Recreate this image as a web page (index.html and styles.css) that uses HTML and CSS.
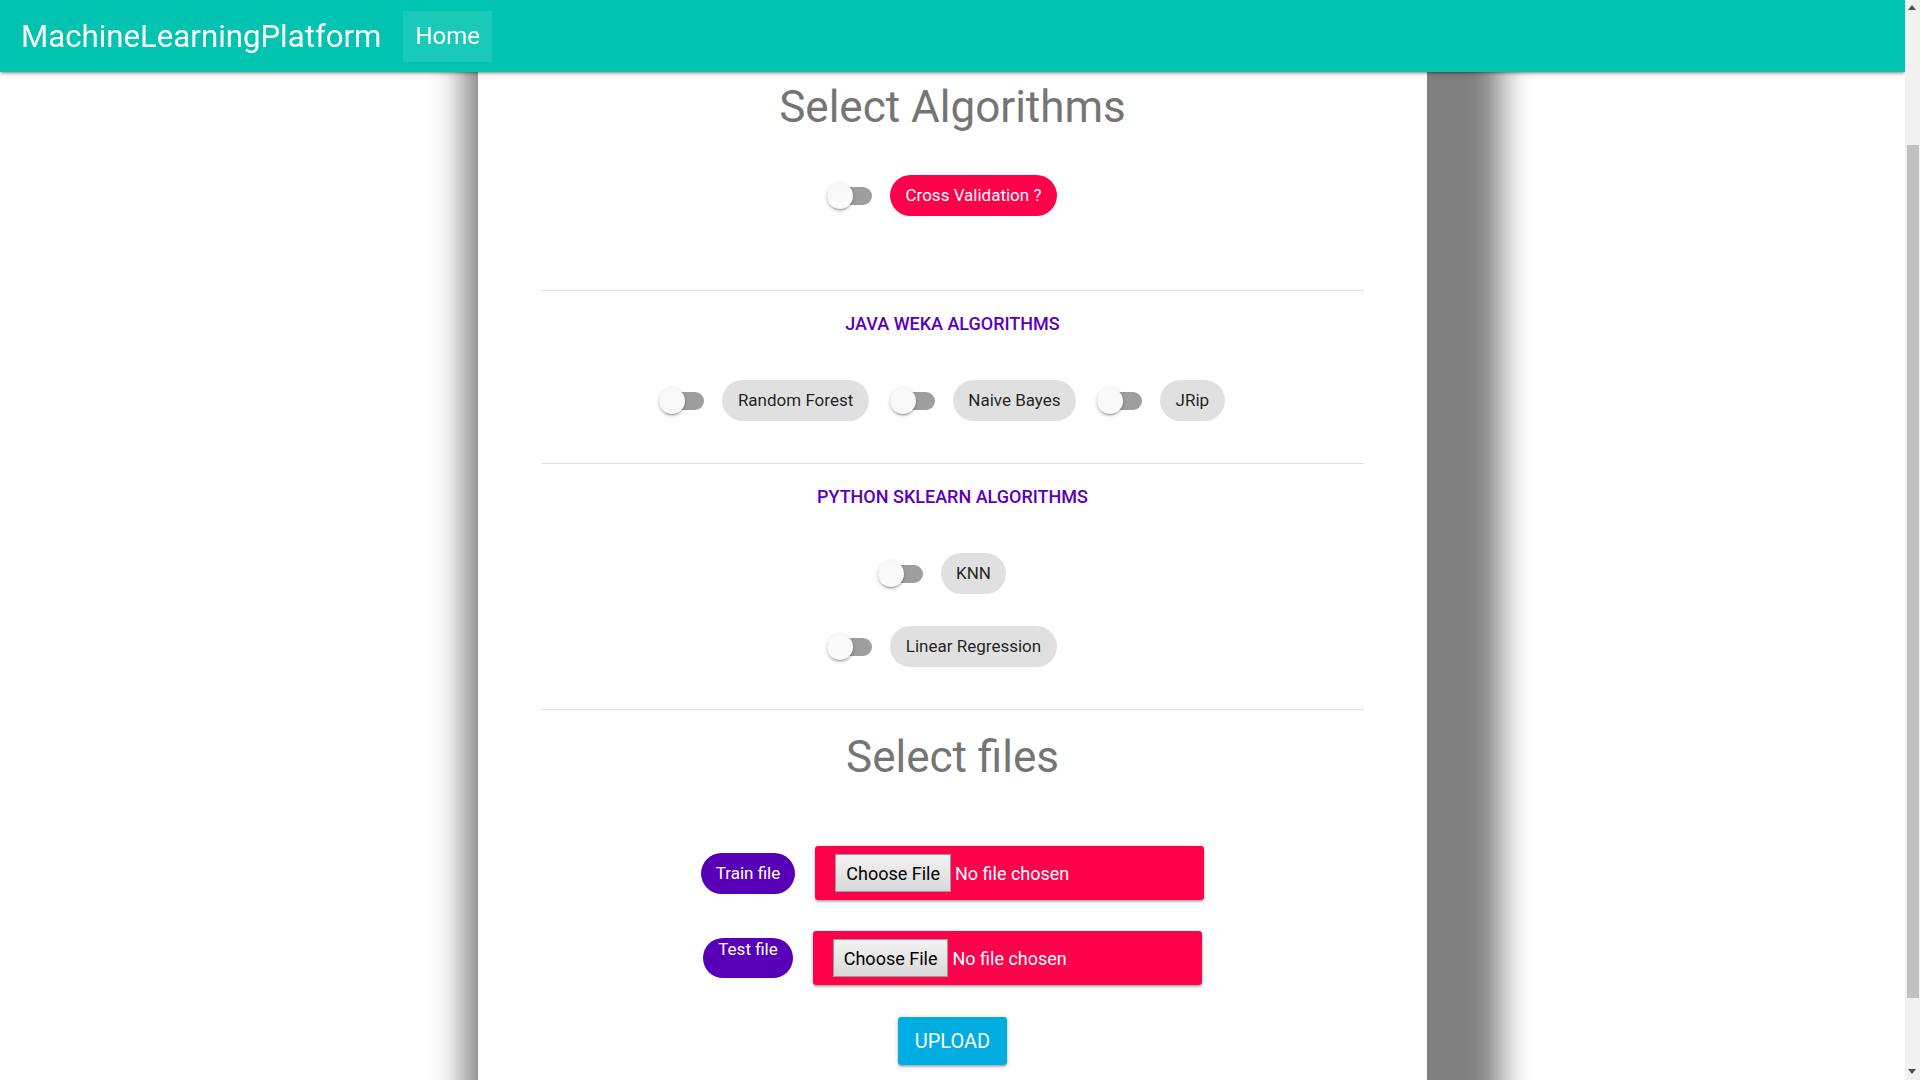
FILE: index.html
```html
<!DOCTYPE html>
<html lang="en">
<head>
<meta charset="utf-8">
<title>MachineLearningPlatform</title>
<link rel="stylesheet" href="styles.css">
</head>
<body>
<header class="navbar">
  <a class="brand" href="#">MachineLearningPlatform</a>
  <a class="nav-link" href="#">Home</a>
</header>

<main class="card">
  <h2 class="section-title">Select Algorithms</h2>

  <div class="algo-row cv-row">
    <label class="algo">
      <span class="switch"></span>
      <span class="chip chip-red">Cross Validation ?</span>
    </label>
  </div>

  <hr class="divider divider-first">

  <h3 class="group-title">JAVA WEKA ALGORITHMS</h3>
  <div class="algo-row group-row">
    <label class="algo">
      <span class="switch"></span>
      <span class="chip">Random Forest</span>
    </label>
    <label class="algo">
      <span class="switch"></span>
      <span class="chip">Naive Bayes</span>
    </label>
    <label class="algo">
      <span class="switch"></span>
      <span class="chip">JRip</span>
    </label>
  </div>

  <hr class="divider">

  <h3 class="group-title">PYTHON SKLEARN ALGORITHMS</h3>
  <div class="algo-row group-row">
    <label class="algo">
      <span class="switch"></span>
      <span class="chip">KNN</span>
    </label>
  </div>
  <div class="algo-row next-row">
    <label class="algo">
      <span class="switch"></span>
      <span class="chip">Linear Regression</span>
    </label>
  </div>

  <hr class="divider">

  <h2 class="section-title">Select files</h2>

  <div class="file-row train-row">
    <span class="chip chip-purple">Train file</span>
    <div class="file-box">
      <input class="file-input" type="file">
    </div>
  </div>

  <div class="file-row test-row">
    <span class="chip chip-purple chip-top">Test file</span>
    <div class="file-box">
      <input class="file-input" type="file">
    </div>
  </div>

  <button class="upload-btn" type="button">UPLOAD</button>
</main>

<div class="scroll-rail" aria-hidden="true">
  <span class="rail-arrow rail-arrow-up"></span>
  <span class="rail-thumb"></span>
  <span class="rail-arrow rail-arrow-down"></span>
</div>
</body>
</html>
```

FILE: styles.css
```css
* {
  box-sizing: border-box;
}

html,
body {
  margin: 0;
  padding: 0;
}

body {
  padding-right: 15px;
  font-family: Roboto, "Liberation Sans", Arial, sans-serif;
  background: #ffffff;
  color: rgba(0, 0, 0, 0.87);
}

/* ---------- Navbar ---------- */
.navbar {
  position: fixed;
  top: 0;
  left: 0;
  right: 15px;
  height: 72px;
  z-index: 10;
  display: flex;
  align-items: center;
  padding-left: 21px;
  background: #00c4b0;
  box-shadow: 0 2px 2px 0 rgba(0, 0, 0, 0.14), 0 3px 1px -2px rgba(0, 0, 0, 0.12), 0 1px 6px 0 rgba(0, 0, 0, 0.22);
}

.brand {
  color: #ffffff;
  font-size: 31.2px;
  font-weight: 400;
  text-decoration: none;
}

.nav-link {
  margin-left: 22px;
  height: 51px;
  line-height: 51px;
  padding: 0 12px;
  font-size: 24px;
  color: #ffffff;
  text-decoration: none;
  background: rgba(255, 255, 255, 0.1);
}

/* ---------- Scroll rail (page scrollbar) ---------- */
.scroll-rail {
  position: fixed;
  top: 0;
  right: 0;
  bottom: 0;
  width: 15px;
  z-index: 20;
  background: #f1f1f1;
}

.rail-thumb {
  position: absolute;
  top: 145px;
  left: 2px;
  right: 1px;
  height: 853px;
  background: #c1c1c1;
}

.rail-arrow {
  position: absolute;
  left: 3px;
  width: 0;
  height: 0;
  border-left: 4.5px solid transparent;
  border-right: 4.5px solid transparent;
}

.rail-arrow-up {
  top: 5px;
  border-bottom: 5px solid #505050;
}

.rail-arrow-down {
  bottom: 6px;
  border-top: 5px solid #505050;
}

/* ---------- Card ---------- */
.card {
  width: 949px;
  margin: 0 auto;
  padding: 81px 63px 99px;
  background: #ffffff;
  box-shadow: 30px 0 30px 44px #808080;
}

.section-title {
  margin: 0;
  font-size: 44px;
  line-height: 52px;
  font-weight: 400;
  color: #757575;
  text-align: center;
}

.divider {
  height: 1px;
  margin: 42px 0 0;
  border: none;
  background: #e0e0e0;
}

.divider-first {
  margin-top: 74px;
}

.group-title {
  margin: 21px 0 0;
  font-size: 18px;
  line-height: 24px;
  font-weight: 500;
  color: #5a00bc;
  text-align: center;
}

.divider + .section-title {
  margin-top: 21px;
}

/* ---------- Toggle rows ---------- */
.algo-row {
  display: flex;
  justify-content: center;
  align-items: center;
  height: 41px;
}

.cv-row {
  margin-top: 42px;
}

.group-row {
  margin-top: 44px;
}

.next-row {
  margin-top: 32px;
}

.algo {
  display: flex;
  align-items: center;
  margin-right: 21px;
}

.switch {
  position: relative;
  width: 45px;
  height: 18px;
  margin-right: 18px;
  border-radius: 9px;
  background: #9e9e9e;
}

.switch::after {
  content: "";
  position: absolute;
  left: 0;
  top: -4px;
  width: 26px;
  height: 26px;
  border-radius: 50%;
  background: #f9f9f9;
  box-shadow: 0 3px 1px -2px rgba(0, 0, 0, 0.2), 0 2px 2px 0 rgba(0, 0, 0, 0.14), 0 1px 5px 0 rgba(0, 0, 0, 0.14);
}

.chip {
  display: inline-block;
  height: 41px;
  line-height: 41px;
  padding: 0 15.5px;
  border-radius: 21px;
  font-size: 17px;
  background: #e0e0e0;
  color: rgba(0, 0, 0, 0.87);
  white-space: nowrap;
}

.chip-red {
  background: #ff004a;
  color: #ffffff;
}

.chip-purple {
  background: #5700b8;
  color: #ffffff;
  padding: 0 15px;
}

.chip-top {
  height: 40px;
  line-height: 20px;
  padding-top: 1px;
  border-radius: 20px;
}

/* ---------- File rows ---------- */
.file-row {
  display: flex;
  justify-content: center;
  align-items: center;
  gap: 20px;
  height: 54px;
}

.train-row {
  margin-top: 63px;
}

.test-row {
  margin-top: 31px;
}

.file-box {
  display: flex;
  align-items: center;
  width: 389px;
  height: 54px;
  padding-left: 20px;
  border-radius: 3px;
  background: #ff004a;
  box-shadow: 0 2px 2px 0 rgba(0, 0, 0, 0.14), 0 3px 1px -2px rgba(0, 0, 0, 0.12), 0 1px 5px 0 rgba(0, 0, 0, 0.2);
}

.file-input {
  width: 360px;
  font-family: Roboto, "Liberation Sans", Arial, sans-serif;
  font-size: 18px;
  color: #ffffff;
}

.file-input::file-selector-button {
  height: 38px;
  margin-right: 4px;
  padding: 0 10px;
  font-family: inherit;
  font-size: 18px;
  color: #000000;
  border: 1px solid #9a9a9a;
  border-radius: 0;
  background: linear-gradient(#f3f3f3, #d9d9d9);
}

.upload-btn {
  display: block;
  height: 48px;
  margin: 32px auto 0;
  padding: 0 17px;
  border: none;
  border-radius: 3px;
  font-family: inherit;
  font-size: 20px;
  color: #ffffff;
  background: #00ade1;
  box-shadow: 0 2px 2px 0 rgba(0, 0, 0, 0.14), 0 3px 1px -2px rgba(0, 0, 0, 0.12), 0 1px 5px 0 rgba(0, 0, 0, 0.2);
}
```
